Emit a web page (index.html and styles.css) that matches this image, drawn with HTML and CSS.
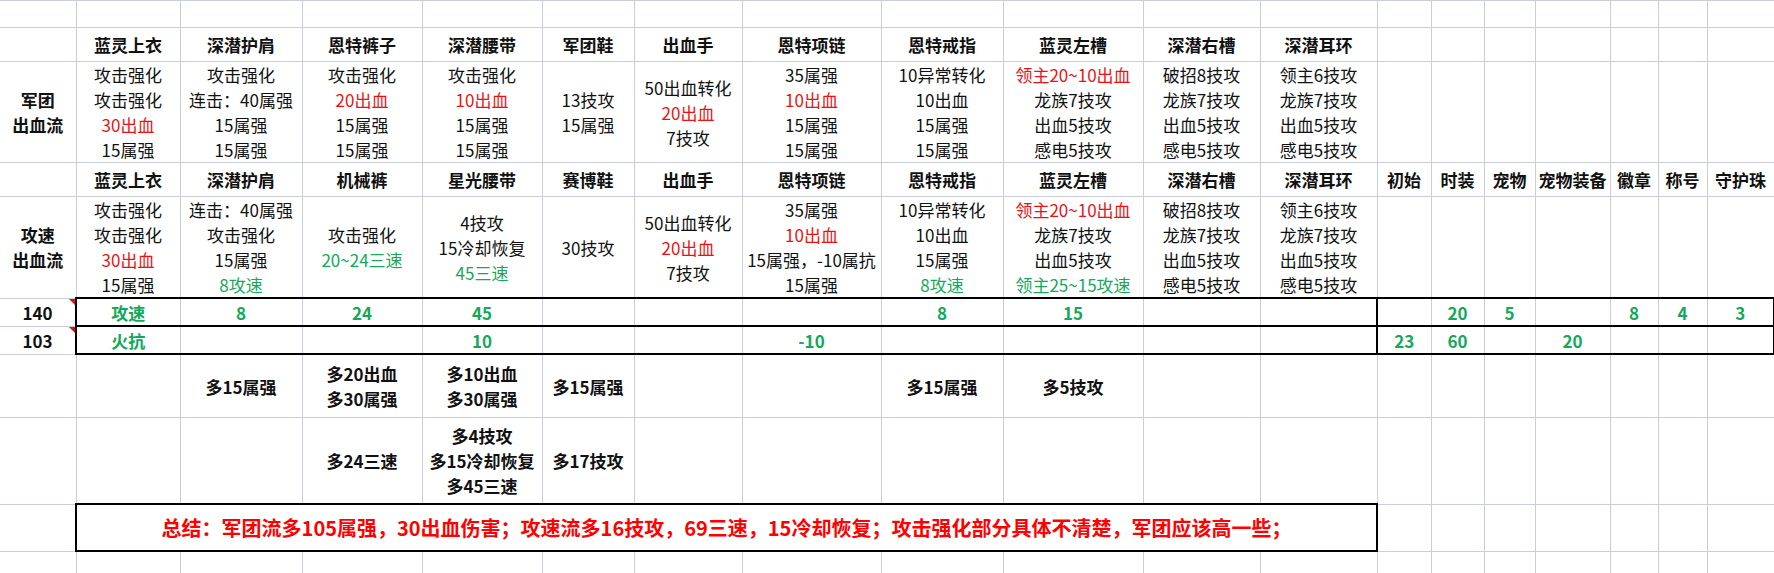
FILE: index.html
```html
<!DOCTYPE html>
<html lang="zh-CN">
<head>
<meta charset="utf-8">
<title>军团流 vs 攻速流</title>
<link rel="stylesheet" href="styles.css">
</head>
<body>
<table class="sheet">
  <colgroup>
    <col style="width:76px"><col style="width:104px"><col style="width:122px"><col style="width:120px"><col style="width:120px"><col style="width:92px"><col style="width:108px"><col style="width:139px"><col style="width:122px"><col style="width:140px"><col style="width:117px"><col style="width:117px"><col style="width:54px"><col style="width:53px"><col style="width:51px"><col style="width:75px"><col style="width:48px"><col style="width:49px"><col style="width:67px">
  </colgroup>
  <tbody>
    <tr class="r-empty first">
      <td></td><td></td><td></td><td></td><td></td><td></td><td></td><td></td><td></td><td></td><td></td><td></td><td></td><td></td><td></td><td></td><td></td><td></td><td></td>
    </tr>
    <tr class="r-head">
      <td></td>
      <td class="b">蓝灵上衣</td><td class="b">深潜护肩</td><td class="b">恩特裤子</td><td class="b">深潜腰带</td><td class="b">军团鞋</td><td class="b">出血手</td><td class="b">恩特项链</td><td class="b">恩特戒指</td><td class="b">蓝灵左槽</td><td class="b">深潜右槽</td><td class="b">深潜耳环</td>
      <td></td><td></td><td></td><td></td><td></td><td></td><td></td>
    </tr>
    <tr class="r-data">
      <td class="b">军团<br>出血流</td>
      <td>攻击强化<br>攻击强化<br><span class="red">30出血</span><br>15属强</td>
      <td>攻击强化<br>连击：40属强<br>15属强<br>15属强</td>
      <td>攻击强化<br><span class="red">20出血</span><br>15属强<br>15属强</td>
      <td>攻击强化<br><span class="red">10出血</span><br>15属强<br>15属强</td>
      <td>13技攻<br>15属强</td>
      <td>50出血转化<br><span class="red">20出血</span><br>7技攻</td>
      <td>35属强<br><span class="red">10出血</span><br>15属强<br>15属强</td>
      <td>10异常转化<br>10出血<br>15属强<br>15属强</td>
      <td><span class="red">领主20~10出血</span><br>龙族7技攻<br>出血5技攻<br>感电5技攻</td>
      <td>破招8技攻<br>龙族7技攻<br>出血5技攻<br>感电5技攻</td>
      <td>领主6技攻<br>龙族7技攻<br>出血5技攻<br>感电5技攻</td>
      <td></td><td></td><td></td><td></td><td></td><td></td><td></td>
    </tr>
    <tr class="r-head">
      <td></td>
      <td class="b">蓝灵上衣</td><td class="b">深潜护肩</td><td class="b">机械裤</td><td class="b">星光腰带</td><td class="b">赛博鞋</td><td class="b">出血手</td><td class="b">恩特项链</td><td class="b">恩特戒指</td><td class="b">蓝灵左槽</td><td class="b">深潜右槽</td><td class="b">深潜耳环</td>
      <td class="b">初始</td><td class="b">时装</td><td class="b">宠物</td><td class="b">宠物装备</td><td class="b">徽章</td><td class="b">称号</td><td class="b">守护珠</td>
    </tr>
    <tr class="r-data">
      <td class="b">攻速<br>出血流</td>
      <td>攻击强化<br>攻击强化<br><span class="red">30出血</span><br>15属强</td>
      <td>连击：40属强<br>攻击强化<br>15属强<br><span class="green">8攻速</span></td>
      <td>攻击强化<br><span class="green">20~24三速</span></td>
      <td>4技攻<br>15冷却恢复<br><span class="green">45三速</span></td>
      <td>30技攻</td>
      <td>50出血转化<br><span class="red">20出血</span><br>7技攻</td>
      <td>35属强<br><span class="red">10出血</span><br>15属强，-10属抗<br>15属强</td>
      <td>10异常转化<br>10出血<br>15属强<br><span class="green">8攻速</span></td>
      <td><span class="red">领主20~10出血</span><br>龙族7技攻<br>出血5技攻<br><span class="green">领主25~15攻速</span></td>
      <td>破招8技攻<br>龙族7技攻<br>出血5技攻<br>感电5技攻</td>
      <td>领主6技攻<br>龙族7技攻<br>出血5技攻<br>感电5技攻</td>
      <td></td><td></td><td></td><td></td><td></td><td></td><td></td>
    </tr>
    <tr class="r-stat">
      <td class="b note">140</td>
      <td class="g bl">攻速</td><td class="g">8</td><td class="g">24</td><td class="g">45</td><td></td><td></td><td></td><td class="g">8</td><td class="g">15</td><td></td><td class="br"></td>
      <td></td><td class="g">20</td><td class="g">5</td><td></td><td class="g">8</td><td class="g">4</td><td class="g br">3</td>
    </tr>
    <tr class="r-stat">
      <td class="b note">103</td>
      <td class="g bl">火抗</td><td></td><td></td><td class="g">10</td><td></td><td></td><td class="g">-10</td><td></td><td></td><td></td><td class="br"></td>
      <td class="g">23</td><td class="g">60</td><td></td><td class="g">20</td><td></td><td></td><td class="br"></td>
    </tr>
    <tr class="r-diff1">
      <td></td><td></td>
      <td class="b">多15属强</td>
      <td class="b">多20出血<br>多30属强</td>
      <td class="b">多10出血<br>多30属强</td>
      <td class="b">多15属强</td>
      <td></td><td></td>
      <td class="b">多15属强</td>
      <td class="b">多5技攻</td>
      <td></td><td></td><td></td><td></td><td></td><td></td><td></td><td></td><td></td>
    </tr>
    <tr class="r-diff2">
      <td></td><td></td><td></td>
      <td class="b">多24三速</td>
      <td class="b">多4技攻<br>多15冷却恢复<br>多45三速</td>
      <td class="b">多17技攻</td>
      <td></td><td></td><td></td><td></td><td></td><td></td><td></td><td></td><td></td><td></td><td></td><td></td><td></td>
    </tr>
    <tr class="r-sum">
      <td></td>
      <td colspan="11" class="summary">总结：军团流多105属强，30出血伤害；攻速流多16技攻，69三速，15冷却恢复；攻击强化部分具体不清楚，军团应该高一些；</td>
      <td></td><td></td><td></td><td></td><td></td><td></td><td></td>
    </tr>
    <tr class="r-empty last">
      <td></td><td></td><td></td><td></td><td></td><td></td><td></td><td></td><td></td><td></td><td></td><td></td><td></td><td></td><td></td><td></td><td></td><td></td><td></td>
    </tr>
  </tbody>
</table>
</body>
</html>
```

FILE: styles.css
```css
html, body {
  margin: 0;
  padding: 0;
  background: #ffffff;
}

body {
  font-family: "Noto Sans CJK SC", "Noto Sans", sans-serif;
  color: #111111;
}

.sheet {
  table-layout: fixed;
  width: 1774px;
  border-collapse: collapse;
  font-size: 17px;
  line-height: 25px;
}

.sheet td {
  border: 1px solid #c9ced8;
  padding: 0;
  text-align: center;
  vertical-align: middle;
  white-space: nowrap;
  overflow: visible;
}

.sheet tr > td:first-child {
  border-left: none;
}

.r-empty.first td { height: 26px; }
.r-head td { height: 33px; }
.r-data td { height: 100px; }
.r-stat td { height: 26px; }
.r-diff1 td { height: 62px; }
.r-diff2 td { height: 85px; }
.r-sum td { height: 45px; }
.r-empty.last td { height: 25px; }

.b {
  font-weight: 700;
}

.red {
  color: #ee1111;
}

.green {
  color: #14a85a;
}

.g {
  color: #14a85a;
  font-weight: 700;
}

.r-stat td:not(:first-child) {
  border-top: 2px solid #000000;
  border-bottom: 2px solid #000000;
}

.sheet td.bl {
  border-left: 2px solid #000000;
}

.sheet td.br {
  border-right: 2px solid #000000;
}

.note {
  position: relative;
}

.note::after {
  content: "";
  position: absolute;
  top: 0;
  right: 0;
  width: 0;
  height: 0;
  border-top: 6px solid #e01010;
  border-left: 6px solid transparent;
}

.sheet td.summary {
  border: 2px solid #000000;
  color: #ff0000;
  font-weight: 700;
  font-size: 20px;
}
```
